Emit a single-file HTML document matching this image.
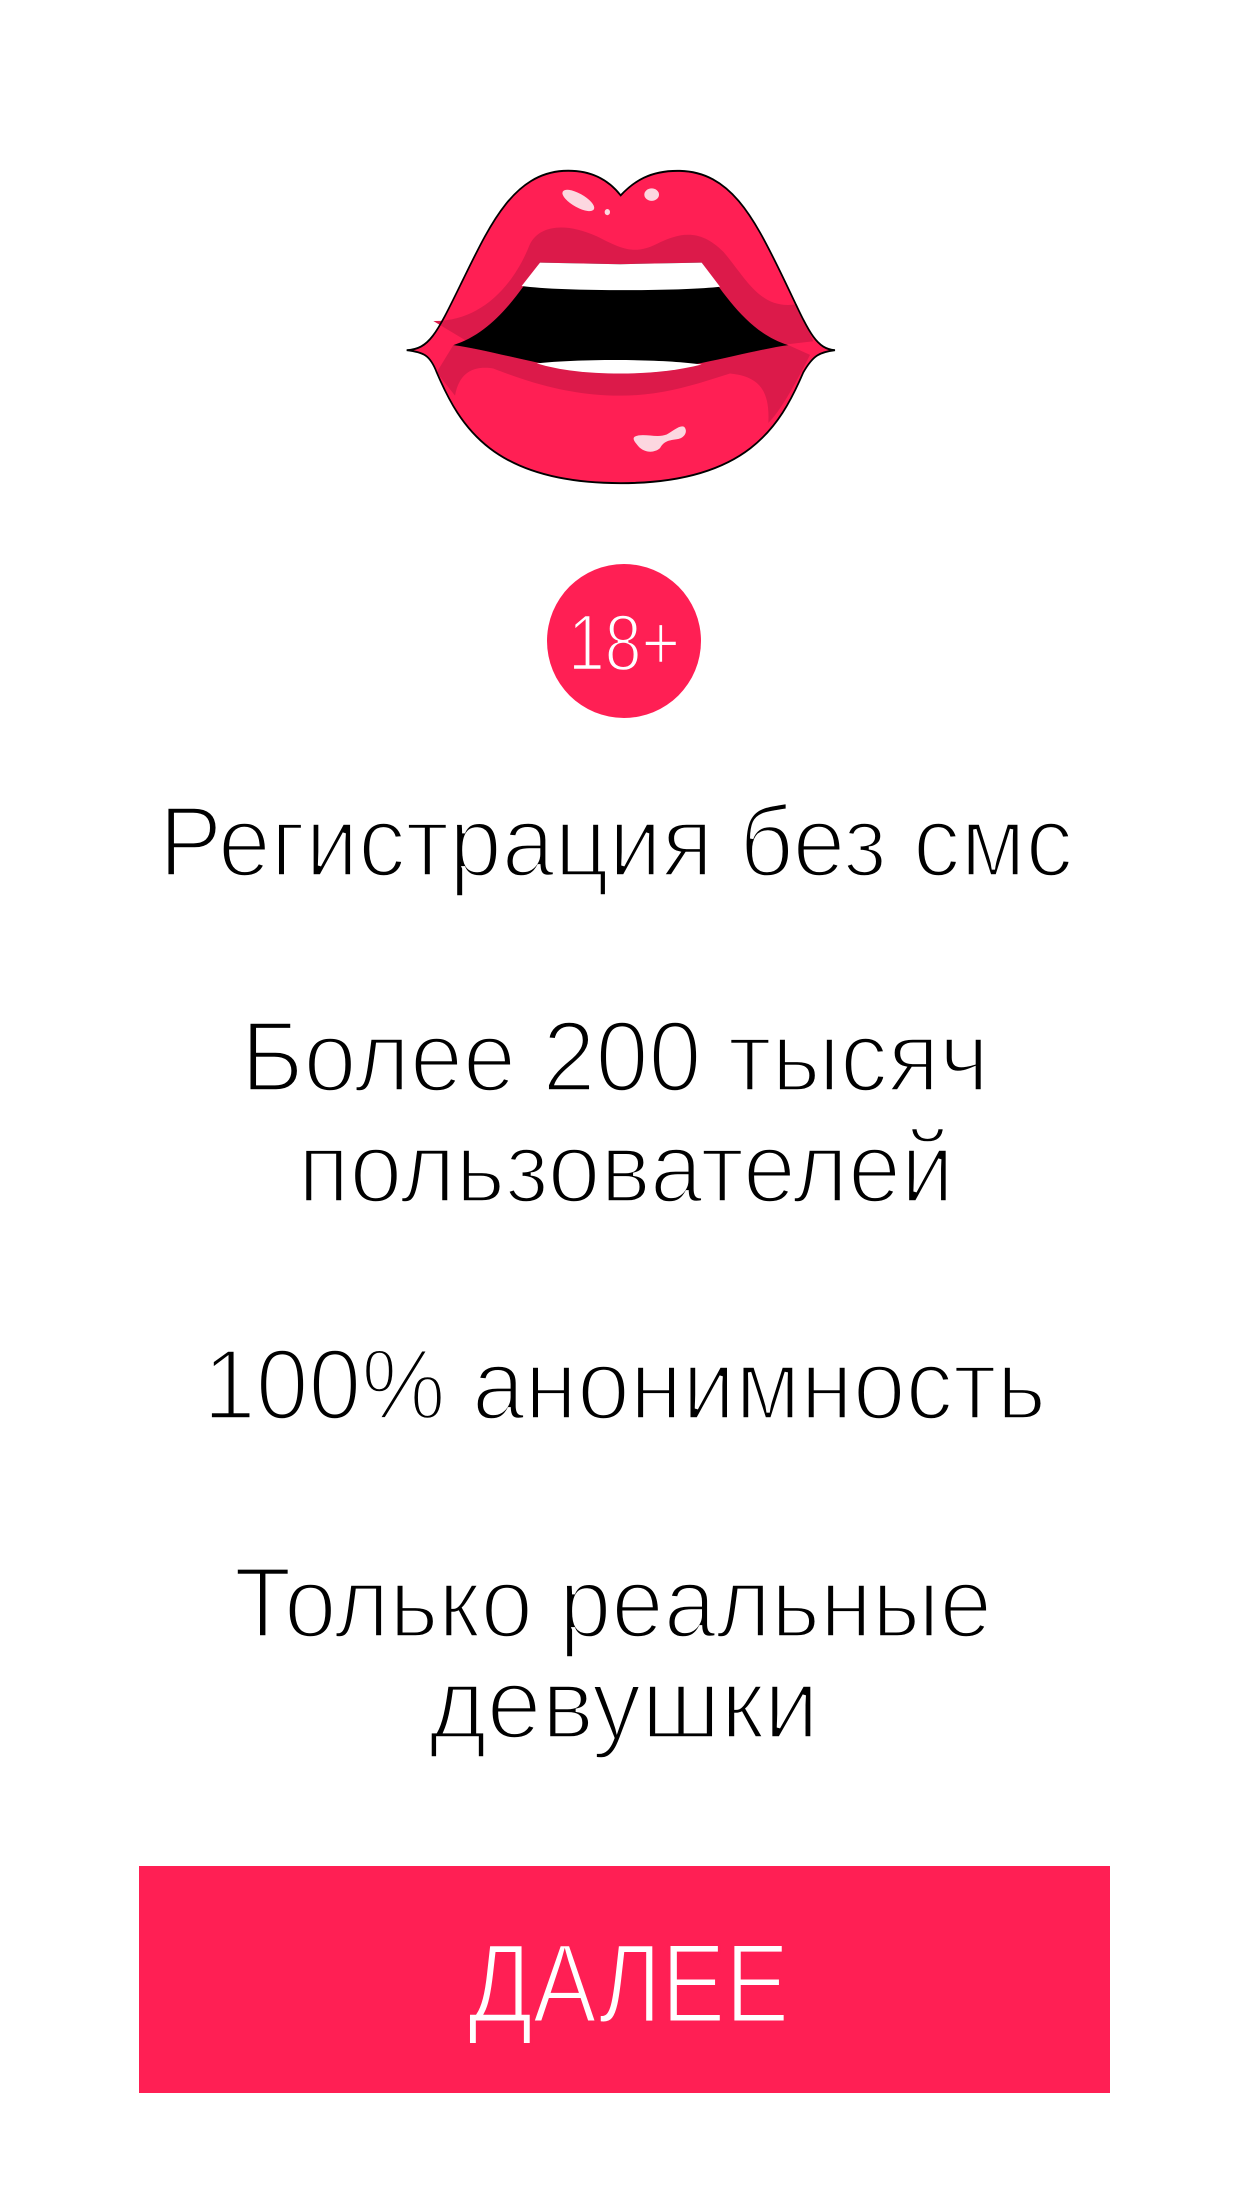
<!DOCTYPE html>
<html><head><meta charset="utf-8"><style>
html,body{margin:0;padding:0;background:#fff;width:1243px;height:2209px;overflow:hidden}
svg{position:absolute;left:0;top:0}
</style></head><body>
<svg width="1243" height="2209" viewBox="0 0 1243 2209">
<svg x="380" y="139" width="480" height="700" viewBox="0 0 1440 1800" preserveAspectRatio="none">
<path d="M80,543 C150,540 170,500 250,360 C330,220 400,90 550,82 C640,78 690,110 722,145 C760,110 810,80 900,82 C1050,85 1120,200 1200,340 C1280,480 1300,540 1365,543 C1320,548 1300,555 1270,600 C1200,740 1100,885 722,885 C340,885 240,740 170,600 C150,555 130,548 80,543 Z" fill="#ff1f54"/>
<path d="M160,468 C300,470 400,380 450,270 C480,220 560,215 650,250 C720,280 760,300 830,270 C900,240 960,230 1030,290 C1100,360 1140,440 1250,425 L1300,520 L1100,540 L300,540 Z" fill="#dc1a4a"/>
<path d="M220,530 C350,545 540,600 720,603 C900,600 1100,545 1225,530 L1290,555 C1240,640 1200,700 1165,730 C1170,650 1140,610 1050,603 C950,630 850,660 720,660 C560,660 430,620 340,590 C270,580 235,610 225,660 L170,600 Z" fill="#dc1a4a"/>
<path d="M220,530 C330,500 400,420 480,318 L720,322 L965,318 C1040,410 1110,500 1225,530 C1100,545 900,600 720,603 C540,600 350,545 220,530 Z" fill="#000"/>
<path d="M480,318 L720,322 L965,318 L1020,380 C900,392 540,392 425,378 Z" fill="#fff"/>
<path d="M470,577 C600,565 850,565 965,580 C880,598 800,603 720,603 C620,603 540,595 470,577 Z" fill="#fff"/>
<path d="M80,543 C150,540 170,500 250,360 C330,220 400,90 550,82 C640,78 690,110 722,145 C760,110 810,80 900,82 C1050,85 1120,200 1200,340 C1280,480 1300,540 1365,543 C1320,548 1300,555 1270,600 C1200,740 1100,885 722,885 C340,885 240,740 170,600 C150,555 130,548 80,543 Z" fill="none" stroke="#000" stroke-width="5"/>
<ellipse cx="595" cy="158" rx="52" ry="18" transform="rotate(25 595 158)" fill="#fcd7e0"/>
<circle cx="682" cy="188" r="8" fill="#fcd7e0"/>
<ellipse cx="815" cy="143" rx="22" ry="16" fill="#fcd7e0"/>
<path d="M765,765 C790,755 830,770 860,760 C880,750 900,735 912,740 C925,750 915,770 890,772 C860,775 850,780 840,795 C820,810 790,805 775,790 C765,780 755,770 765,765 Z" fill="#fcd7e0"/>
</svg>
<circle cx="624" cy="641" r="77" fill="#ff1f54"/>
<text x="624" y="670" text-anchor="middle" font-family="Liberation Sans, sans-serif" font-size="80" fill="#fff" stroke="#ff1f54" stroke-width="2.5" textLength="112" lengthAdjust="spacingAndGlyphs">18+</text>
<g font-family="Liberation Sans, sans-serif" font-size="100" fill="#000" stroke="#fff" stroke-width="3.5">
<text x="159" y="876" textLength="914" lengthAdjust="spacingAndGlyphs">Регистрация без смс</text>
<text x="241" y="1091" textLength="748" lengthAdjust="spacingAndGlyphs">Более 200 тысяч</text>
<text x="298" y="1202" textLength="656" lengthAdjust="spacingAndGlyphs">пользователей</text>
<text x="203" y="1419" textLength="843" lengthAdjust="spacingAndGlyphs">100% анонимность</text>
<text x="234" y="1637" textLength="758" lengthAdjust="spacingAndGlyphs">Только реальные</text>
<text x="429" y="1738" textLength="390" lengthAdjust="spacingAndGlyphs">девушки</text>
</g>
<rect x="139" y="1866" width="971" height="227" fill="#ff1f54"/>
<text x="468" y="2022" font-family="Liberation Sans, sans-serif" font-size="112" fill="#fff" stroke="#ff1f54" stroke-width="3" textLength="321" lengthAdjust="spacingAndGlyphs">ДАЛЕЕ</text>
</svg>
</body></html>
